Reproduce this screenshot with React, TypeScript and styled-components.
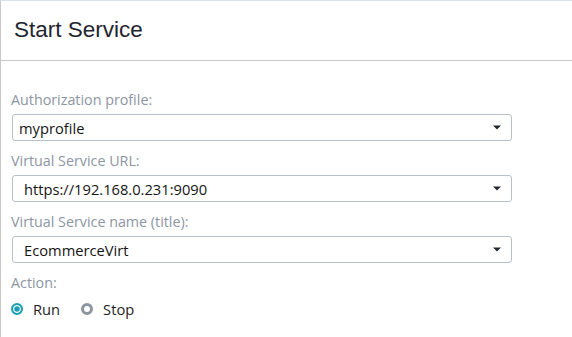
import { FC, useState } from "react";
import styled, { createGlobalStyle } from "styled-components";

const GlobalStyle = createGlobalStyle`
	html, body {
		margin: 0;
		padding: 0;
		background: #ffffff;
	}
	body {
		font-family: "Open Sans", "Noto Sans", sans-serif;
	}
`;

type Field = { label: string; value: string; inset: number };

const fields: Field[] = [
	{ label: "Authorization profile:", value: "myprofile", inset: 6 },
	{ label: "Virtual Service URL:", value: "https://192.168.0.231:9090", inset: 11 },
	{ label: "Virtual Service name (title):", value: "EcommerceVirt", inset: 11 },
];

const App: FC = () => {
	const [action, setAction] = useState<"run" | "stop">("run");

	return (
		<>
			<GlobalStyle />
			<Panel>
				<Header>
					<Title>Start Service</Title>
				</Header>
				<Body>
					{fields.map((f) => (
						<Group key={f.label}>
							<Label>{f.label}</Label>
							<Select $inset={f.inset}>
								<SelectValue>{f.value}</SelectValue>
								<Caret viewBox="0 0 8 5">
									<path d="M0 0.5 H8 L4 4.5 Z" fill="#23272e" />
								</Caret>
							</Select>
						</Group>
					))}
					<Group>
						<Label>Action:</Label>
						<RadioRow>
							<RadioOption onClick={() => setAction("run")}>
								<RadioDot $checked={action === "run"} />
								Run
							</RadioOption>
							<RadioOption onClick={() => setAction("stop")}>
								<RadioDot $checked={action === "stop"} />
								Stop
							</RadioOption>
						</RadioRow>
					</Group>
				</Body>
			</Panel>
		</>
	);
};

export default App;

const Panel = styled.div`
	width: 572px;
	height: 337px;
	box-sizing: border-box;
	border-top: 1px solid #dde3ea;
	border-left: 1px solid #c9c9c9;
	background: #ffffff;
	overflow: hidden;
`;

const Header = styled.div`
	height: 60px;
	box-sizing: border-box;
	border-bottom: 1px solid #c8c8c8;
	display: flex;
	align-items: center;
	padding: 0 0 2px 13px;
`;

const Title = styled.h1`
	margin: 0;
	font-family: "Liberation Sans", Arial, sans-serif;
	font-size: 22.5px;
	font-weight: normal;
	color: #1f2530;
`;

const Body = styled.div`
	display: flex;
	flex-direction: column;
	gap: 10px;
	padding: 29px 0 0 10px;
`;

const Group = styled.div`
	display: flex;
	flex-direction: column;
	gap: 4px;
`;

const Label = styled.div`
	font-size: 14.3px;
	line-height: 20px;
	color: #8c96a3;
`;

const Select = styled.div<{ $inset: number }>`
	width: 500px;
	height: 27px;
	box-sizing: border-box;
	margin-left: 1px;
	border: 1px solid #b9c0ca;
	border-radius: 3px;
	display: flex;
	align-items: center;
	justify-content: space-between;
	padding: 0 10px 0 ${(p) => p.$inset}px;
	background: #ffffff;
`;

const SelectValue = styled.span`
	font-size: 14.7px;
	color: #141414;
`;

const Caret = styled.svg`
	width: 8px;
	height: 5px;
`;

const RadioRow = styled.div`
	display: flex;
	gap: 21px;
	padding: 2px 0 0 0;
`;

const RadioOption = styled.label`
	display: flex;
	align-items: center;
	gap: 10px;
	font-size: 14.7px;
	line-height: 20px;
	color: #1e1e1e;
	cursor: pointer;
`;

const RadioDot = styled.span<{ $checked: boolean }>`
	width: 12px;
	height: 12px;
	box-sizing: border-box;
	border-radius: 50%;
	border: ${(p) => (p.$checked ? "2px solid #1aa0b4" : "3px solid #8d95a1")};
	background: ${(p) => (p.$checked ? "#1aa0b4" : "#ffffff")};
	box-shadow: ${(p) => (p.$checked ? "inset 0 0 0 1.2px #ffffff" : "none")};
`;
